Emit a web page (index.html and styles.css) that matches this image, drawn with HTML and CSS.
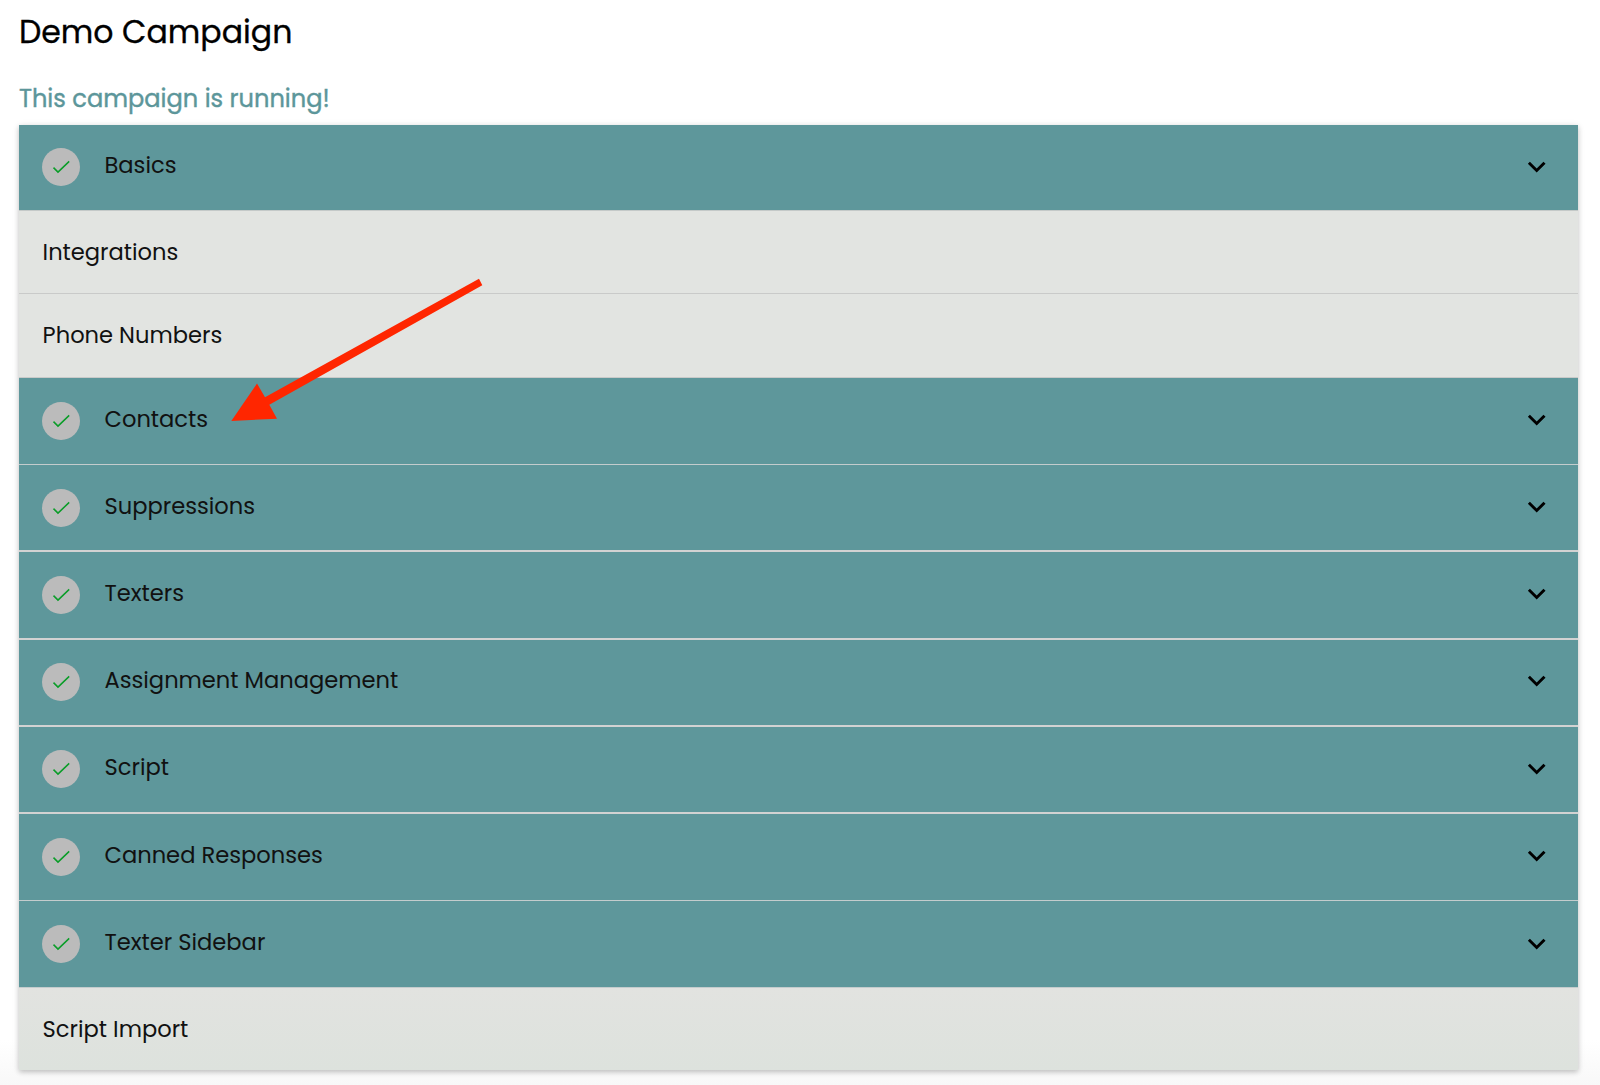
FILE: index.html
```
<!DOCTYPE html>
<html lang="en">
<head>
    <meta charset="UTF-8">
    <title>Demo Campaign</title>
    <link rel="stylesheet" href="styles.css">
</head>
<body>
<svg class="defs" width="0" height="0">
    <symbol id="check" viewBox="0 0 38 38"><path d="M11.5 19.6 L16 24.1 L27.2 13.4" fill="none" stroke="#0a9d28" stroke-width="1.5"/></symbol>
    <symbol id="more" viewBox="0 0 24 24"><path d="M16.59 8.59L12 13.17 7.41 8.59 6 10l6 6 6-6z"/></symbol>
</svg>
<h1>Demo Campaign</h1>
<div class="status">This campaign is running!</div>
<ul class="sections">
    <li class="done first"><svg class="avatar"><use href="#check"/></svg><span>Basics</span><svg class="arrow"><use href="#more"/></svg></li>
    <li><span>Integrations</span></li>
    <li><span>Phone Numbers</span></li>
    <li class="done thin"><svg class="avatar"><use href="#check"/></svg><span>Contacts</span><svg class="arrow"><use href="#more"/></svg></li>
    <li class="done"><svg class="avatar"><use href="#check"/></svg><span>Suppressions</span><svg class="arrow"><use href="#more"/></svg></li>
    <li class="done"><svg class="avatar"><use href="#check"/></svg><span>Texters</span><svg class="arrow"><use href="#more"/></svg></li>
    <li class="done"><svg class="avatar"><use href="#check"/></svg><span>Assignment Management</span><svg class="arrow"><use href="#more"/></svg></li>
    <li class="done"><svg class="avatar"><use href="#check"/></svg><span>Script</span><svg class="arrow"><use href="#more"/></svg></li>
    <li class="done thin"><svg class="avatar"><use href="#check"/></svg><span>Canned Responses</span><svg class="arrow"><use href="#more"/></svg></li>
    <li class="done thin"><svg class="avatar"><use href="#check"/></svg><span>Texter Sidebar</span><svg class="arrow"><use href="#more"/></svg></li>
    <li class="import"><span>Script Import</span></li>
</ul>
<svg class="pointer" viewBox="0 0 252 144"><path d="M0.3 143 L26 105.5 L34 119.3 L248 0.7 L251.3 7.2 L38.3 126.7 L46 140.7 Z" fill="#ff2600"/></svg>
</body>
</html>
```
FILE: styles.css
```
*{
    margin: 0;
    padding: 0;
    box-sizing: border-box;
}
body{
    height: 1085px;
    padding: 0 21.7px 0 18.6px;
    overflow: hidden;
    font-family: Poppins, Inter, sans-serif;
    color: #111;
    background: linear-gradient(#fff 1040px, #f8f8f8 1085px);
}
.defs{
    position: absolute;
}
h1{
    height: 64px;
    padding-left: .3px;
    line-height: 65px;
    font-size: 31.6px;
    font-weight: 400;
    color: #000;
    -webkit-text-stroke: .3px #000;
}
.status{
    height: 60.6px;
    padding-left: .3px;
    line-height: 70px;
    font-size: 24.1px;
    font-weight: 400;
    color: #5c969a;
    -webkit-text-stroke: .4px #5c969a;
}
.sections{
    list-style: none;
    box-shadow: 0 2px 5px rgba(0,0,0,.2), 0 1px 8px rgba(0,0,0,.08);
}
li{
    display: flex;
    align-items: center;
    height: 83.5px;
    padding: 0 24px;
    border-bottom: 1px solid #c9cac9;
    background: #e2e4e1;
    font-size: 22.6px;
}
li.done{
    height: 87.2px;
    padding-left: 23.6px;
    border-bottom: 2px solid #d2d2d2;
    background: #5e979b;
}
li.thin{
    border-bottom: 1px solid #c4cccd;
}
li.first{
    height: 86.4px;
    border-bottom: 1px solid #c4c9c8;
}
li.import{
    height: 82.2px;
    border-bottom: 0;
    background: linear-gradient(#e2e3e0, #dde2dd);
}
li span{
    flex: 1;
    padding-bottom: 1px;
    white-space: nowrap;
}
li.done span{
    margin-left: 24.3px;
    padding-bottom: 4.3px;
}
.avatar{
    width: 38px;
    height: 38px;
    border-radius: 50%;
    background: #bbb;
}
.arrow{
    width: 35.4px;
    height: 35.4px;
    margin-bottom: 2px;
}
.pointer{
    position: absolute;
    left: 231px;
    top: 278px;
    width: 252px;
    height: 144px;
}
```
